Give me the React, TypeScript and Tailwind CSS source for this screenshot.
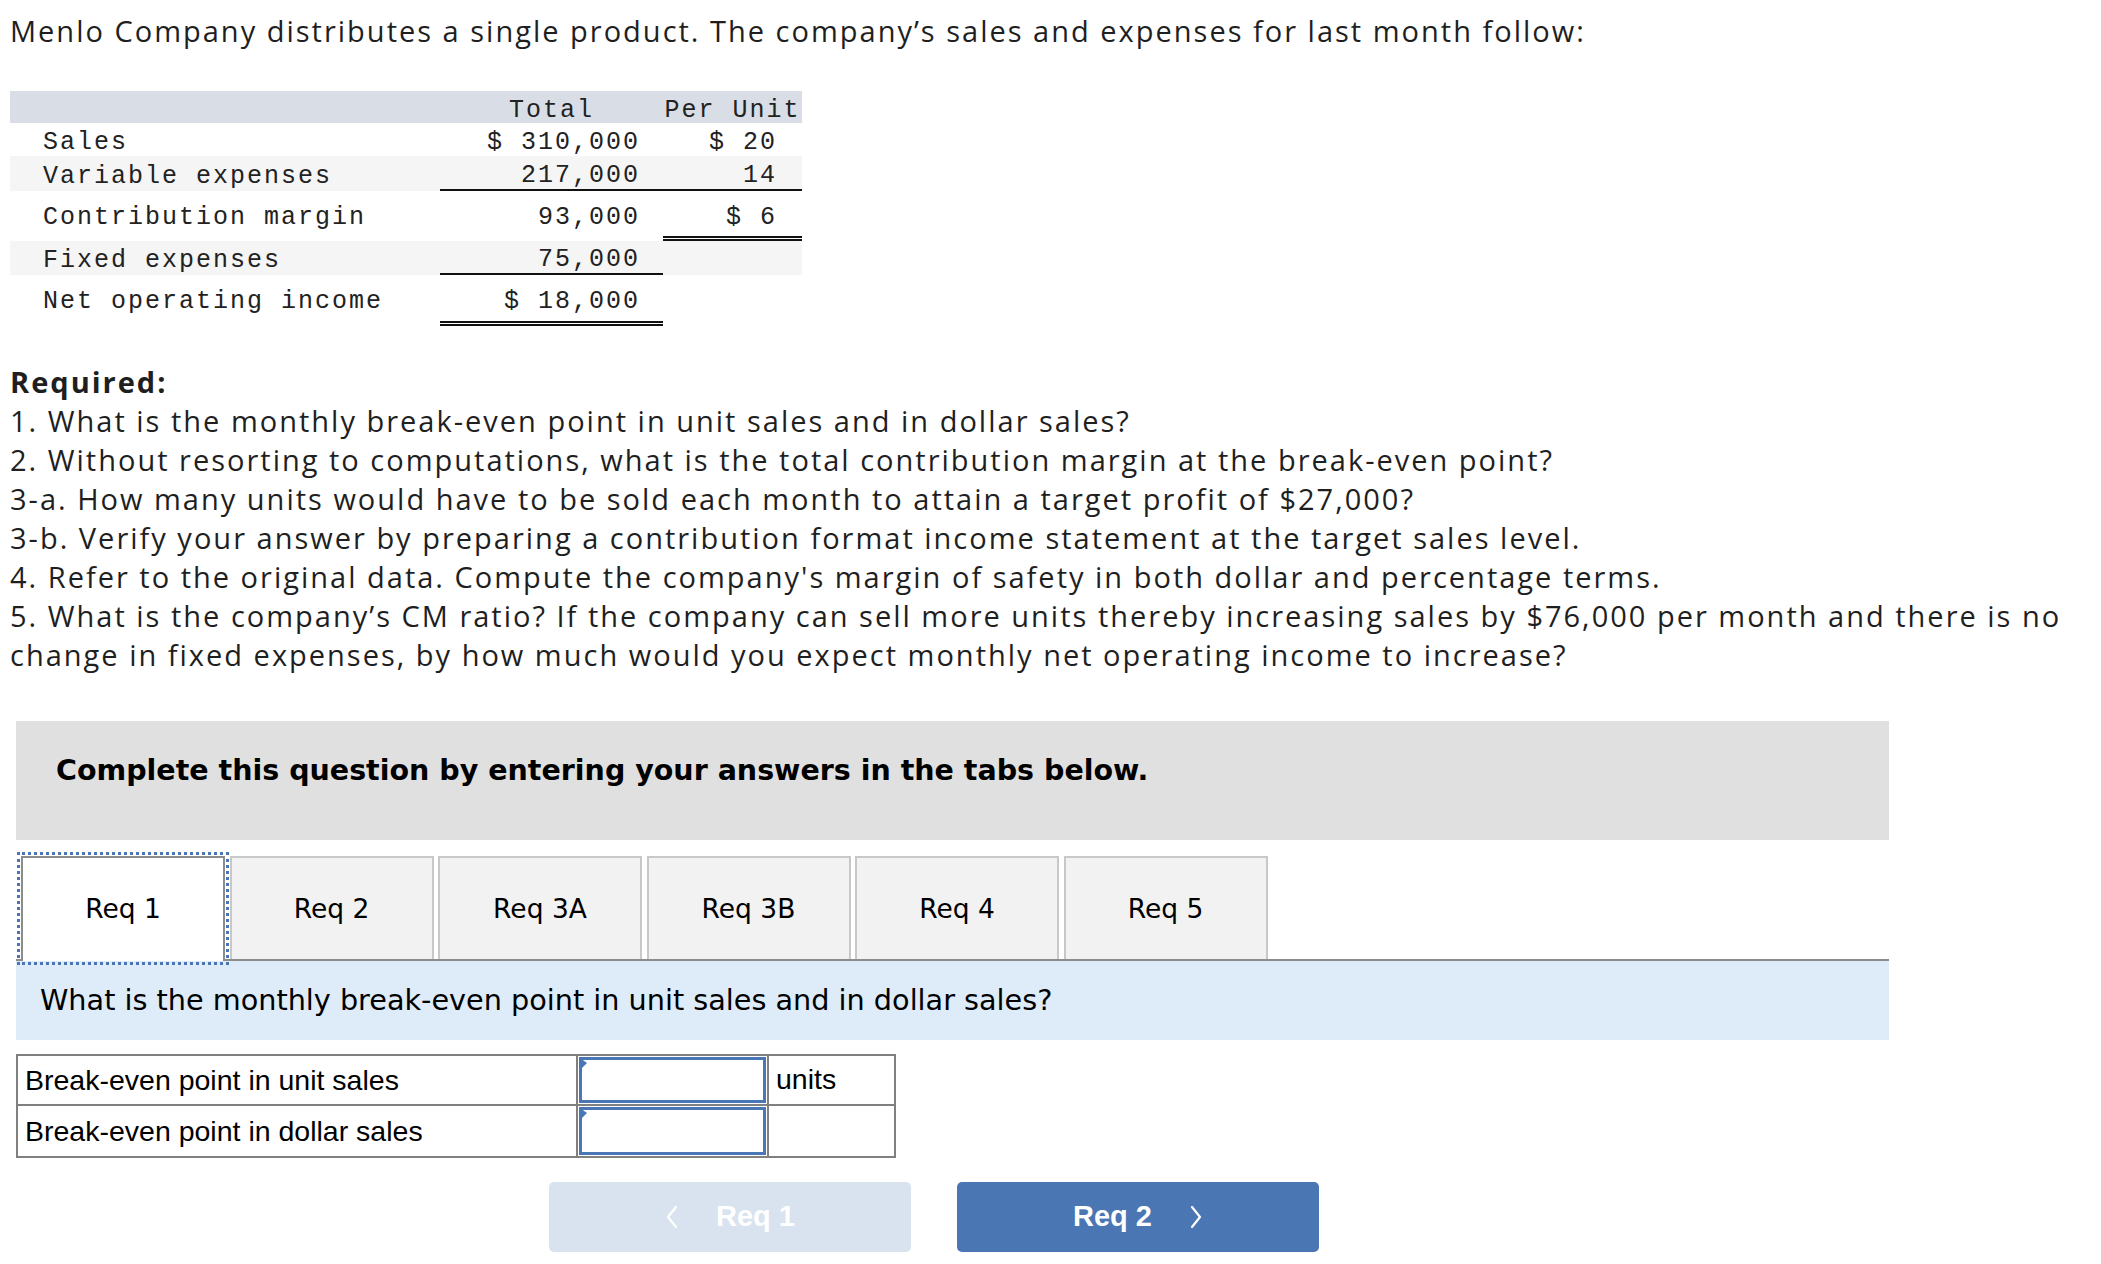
import React from "react";

const mono = "font-['Liberation_Mono',monospace] text-[25px] tracking-[2px] text-[#222]";
const prox = "font-['Open_Sans',sans-serif] text-[29px] tracking-[2px] leading-[39px]";

function Chevron({ dir }: { dir: "left" | "right" }) {
  return (
    <svg width="14" height="24" viewBox="0 0 14 24" fill="none">
      {dir === "left" ? (
        <polyline points="11,2 3,12 11,22" stroke="white" strokeWidth="2.2" strokeLinecap="round" strokeLinejoin="round" />
      ) : (
        <polyline points="3,2 11,12 3,22" stroke="white" strokeWidth="2.2" strokeLinecap="round" strokeLinejoin="round" />
      )}
    </svg>
  );
}

function InputCell() {
  return (
    <div className="relative w-[191px] h-full border-l-2 border-[#808080] p-[1px]">
      <div className="h-full w-full border-[3px] border-[#4a76b5] bg-white" />
      <svg className="absolute left-[2px] top-[2px]" width="8" height="13" viewBox="0 0 8 13">
        <polygon points="0,0 7,5 0,12" fill="#4a76b5" />
      </svg>
    </div>
  );
}

export default function App() {
  const tabs = ["Req 1", "Req 2", "Req 3A", "Req 3B", "Req 4", "Req 5"];
  return (
    <div className="w-[2101px] min-h-[1264px] bg-white text-[#1f1f1f]">
      <div className="pl-[10px] pt-[11px]">
        <p className={`${prox} whitespace-nowrap`}>
          Menlo Company distributes a single product. The company’s sales and expenses for last month follow:
        </p>

        {/* Income statement table */}
        <div className={`mt-[41px] w-[792px] ${mono}`}>
          <div className="flex h-[32px] items-center bg-[#d9dee6] pt-[7px]">
            <div className="w-[430px]" />
            <div className="w-[223px] text-center">Total</div>
            <div className="w-[139px] text-center">Per Unit</div>
          </div>
          <div className="flex h-[33px] items-center pt-[7px]">
            <div className="w-[430px] pl-[33px]">Sales</div>
            <div className="w-[223px] pr-[23px] text-right">$ 310,000</div>
            <div className="w-[139px] pr-[25px] text-right">$ 20</div>
          </div>
          <div className="flex h-[35px] bg-[#f5f5f5]">
            <div className="flex w-[430px] items-center pl-[33px] pt-[7px]">Variable expenses</div>
            <div className="flex w-[223px] items-center justify-end border-b-2 border-[#111] pr-[23px] pt-[7px]">217,000</div>
            <div className="flex w-[139px] items-center justify-end border-b-2 border-[#111] pr-[25px] pt-[7px]">14</div>
          </div>
          <div className="flex h-[50px]">
            <div className="flex w-[430px] items-center pb-[5px] pl-[33px] pt-[8px]">Contribution margin</div>
            <div className="flex w-[223px] items-center justify-end pb-[5px] pr-[23px] pt-[8px]">93,000</div>
            <div className="flex w-[139px] items-center justify-end border-b-[5px] border-double border-[#111] pr-[25px] pt-[8px]">$ 6</div>
          </div>
          <div className="flex h-[34px] bg-[#f5f5f5]">
            <div className="flex w-[430px] items-center pl-[33px] pt-[6px]">Fixed expenses</div>
            <div className="flex w-[223px] items-center justify-end border-b-2 border-[#111] pr-[23px] pt-[6px]">75,000</div>
            <div className="w-[139px]" />
          </div>
          <div className="flex h-[51px]">
            <div className="flex w-[430px] items-center pb-[5px] pl-[33px] pt-[8px]">Net operating income</div>
            <div className="flex w-[223px] items-center justify-end border-b-[5px] border-double border-[#111] pr-[23px] pt-[8px]">$ 18,000</div>
            <div className="w-[139px]" />
          </div>
        </div>

        {/* Required */}
        <div className={`mt-[36px] ${prox}`}>
          <p className="font-bold">Required:</p>
          <p>1. What is the monthly break-even point in unit sales and in dollar sales?</p>
          <p>2. Without resorting to computations, what is the total contribution margin at the break-even point?</p>
          <p>3-a. How many units would have to be sold each month to attain a target profit of $27,000?</p>
          <p>3-b. Verify your answer by preparing a contribution format income statement at the target sales level.</p>
          <p>4. Refer to the original data. Compute the company's margin of safety in both dollar and percentage terms.</p>
          <p className="whitespace-nowrap">
            5. What is the company’s CM ratio? If the company can sell more units thereby increasing sales by $76,000 per month and there is no
            <br />
            change in fixed expenses, by how much would you expect monthly net operating income to increase?
          </p>
        </div>
      </div>

      {/* Question panel */}
      <div className="ml-[16px] mt-[47px] w-[1873px]">
        <div className="h-[119px] bg-[#e0e0e0] pl-[40px] pt-[35px] font-['DejaVu_Sans',Verdana,sans-serif] text-[28.5px] font-bold leading-[30px] text-black">
          Complete this question by entering your answers in the tabs below.
        </div>

        <div className="mt-[16px] flex gap-[4.5px] border-b-2 border-[#8c8c8c] pl-[5px]">
          {tabs.map((t, i) =>
            i === 0 ? (
              <div
                key={t}
                className="relative z-10 -mb-[2px] flex h-[105px] w-[204px] items-center justify-center border-x-2 border-t-2 border-[#8c8c8c] bg-white pb-[2px] font-['DejaVu_Sans',Verdana,sans-serif] text-[26.5px] text-black outline-[3px] outline-dotted outline-offset-[1px] outline-[#4a76b5]"
              >
                {t}
              </div>
            ) : (
              <div
                key={t}
                className="flex h-[103px] w-[204px] items-center justify-center border-x-2 border-t-2 border-[#c8c8c8] bg-[#f2f2f2] font-['DejaVu_Sans',Verdana,sans-serif] text-[26.5px] text-black"
              >
                {t}
              </div>
            )
          )}
        </div>

        <div className="flex h-[79px] items-center bg-[#deebf8] pl-[24px] font-['DejaVu_Sans',Verdana,sans-serif] text-[28.7px] text-black">
          What is the monthly break-even point in unit sales and in dollar sales?
        </div>

        {/* Answer table */}
        <div className="mt-[14px] w-[880px] border-2 border-[#808080] font-['Liberation_Sans',Arial,sans-serif] text-[28.5px] text-black">
          <div className="flex h-[50px] border-b-2 border-[#808080]">
            <div className="flex w-[558px] items-center pl-[7px]">Break-even point in unit sales</div>
            <InputCell />
            <div className="flex flex-1 items-start border-l-2 border-[#808080] pl-[7px] pt-[2px]">units</div>
          </div>
          <div className="flex h-[50px]">
            <div className="flex w-[558px] items-center pl-[7px]">Break-even point in dollar sales</div>
            <InputCell />
            <div className="flex-1 border-l-2 border-[#808080]" />
          </div>
        </div>

        {/* Nav buttons */}
        <div className="mt-[24px] flex gap-[46px] pl-[533px]">
          <div className="flex h-[70px] w-[362px] items-center justify-center gap-[37px] rounded-[5px] bg-[#d9e3ef] font-['Liberation_Sans',Arial,sans-serif] text-[29px] font-bold text-white">
            <Chevron dir="left" />
            <span>Req 1</span>
          </div>
          <div className="flex h-[70px] w-[362px] items-center justify-center gap-[37px] rounded-[5px] bg-[#4a76b4] font-['Liberation_Sans',Arial,sans-serif] text-[29px] font-bold text-white">
            <span>Req 2</span>
            <Chevron dir="right" />
          </div>
        </div>
      </div>
    </div>
  );
}
